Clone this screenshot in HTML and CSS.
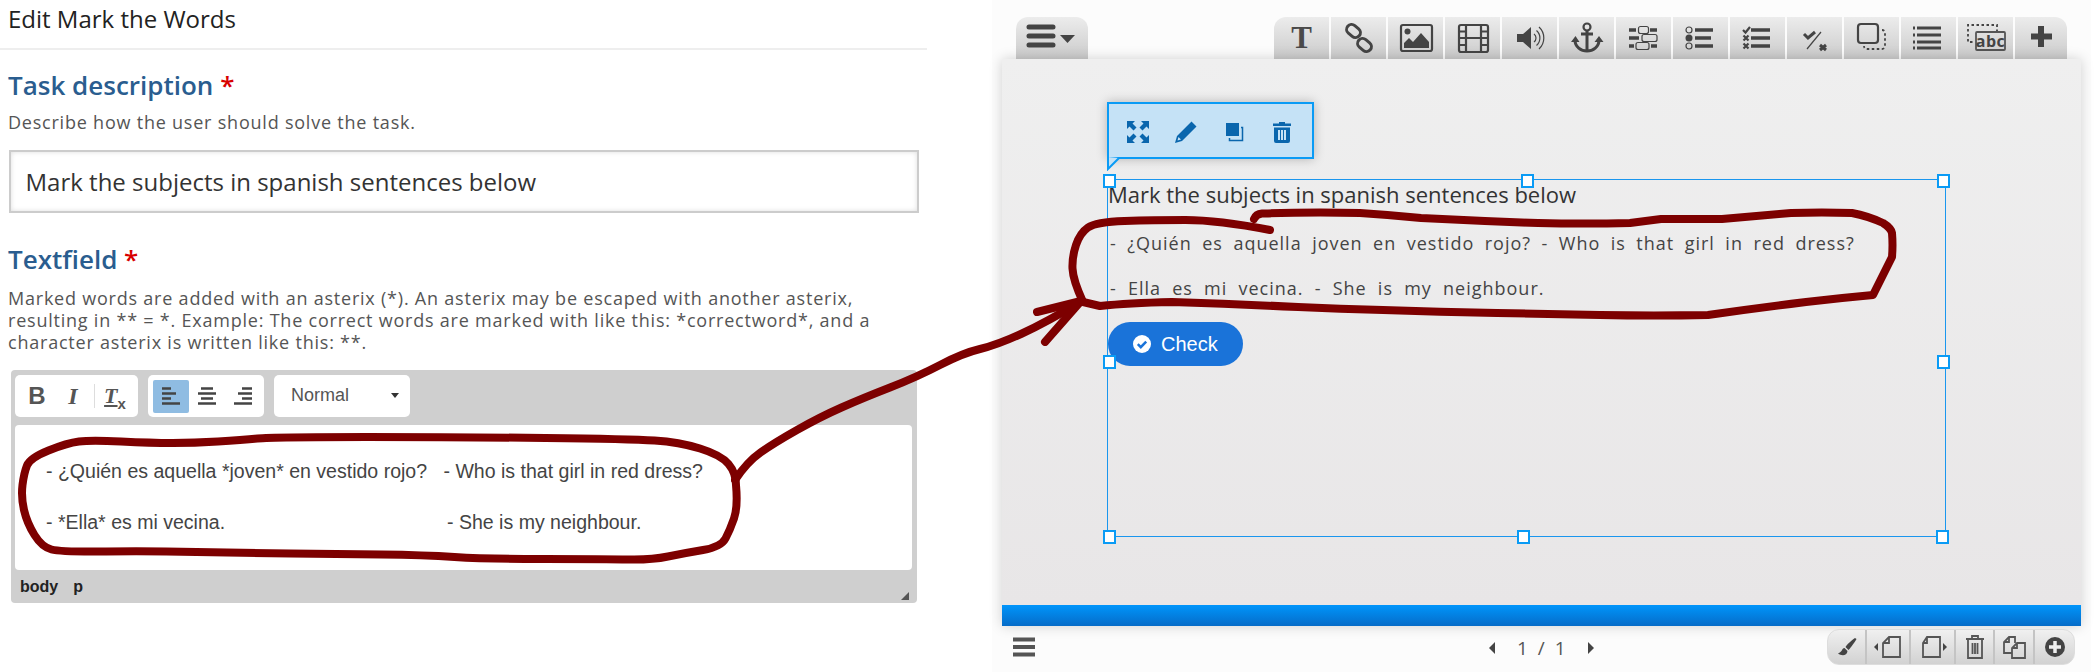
FILE: index.html
```html
<!DOCTYPE html>
<html lang="en">
<head>
<meta charset="utf-8">
<title>Edit Mark the Words</title>
<link rel="stylesheet" href="styles.css">
</head>
<body>
<main class="page">
  <section class="form">
    <h1 class="form-title">Edit Mark the Words</h1>
    <h2 class="field-label label-task">Task description <span class="req">*</span></h2>
    <p class="help help-task">Describe how the user should solve the task.</p>
    <div class="text-input">Mark the subjects in spanish sentences below</div>
    <h2 class="field-label label-text">Textfield <span class="req">*</span></h2>
    <p class="help help-text">Marked words are added with an asterix (*). An asterix may be escaped with another asterix,<br>resulting in ** = *. Example: The correct words are marked with like this: *correctword*, and a<br>character asterix is written like this: **.</p>
    <div class="rte">
      <div class="rte-toolbar">
        <div class="rte-group rte-group-a">
          <span class="rte-btn rte-b">B</span>
          <span class="rte-btn rte-i">I</span>
          <span class="rte-sep"></span>
          <span class="rte-btn rte-tx"><span class="rte-t">T</span><span class="rte-x">x</span></span>
        </div>
        <div class="rte-group rte-group-b">
          <span class="rte-btn rte-on"><svg width="20" height="20" viewBox="0 0 20 20"><path d="M1 2.500h9M1 7.500h14M1 12.500h9M1 17.500h18" class="ln"/></svg></span>
          <span class="rte-btn"><svg width="20" height="20" viewBox="0 0 20 20"><path d="M4 2.500h12M1 7.500h18M4 12.500h12M1 17.500h18" class="ln"/></svg></span>
          <span class="rte-btn"><svg width="20" height="20" viewBox="0 0 20 20"><path d="M9 2.500h10M5 7.500h14M9 12.500h10M1 17.500h18" class="ln"/></svg></span>
        </div>
        <div class="rte-group rte-select"><span>Normal</span><i class="rte-caret"></i></div>
      </div>
      <div class="rte-content">
        <p class="rte-line"><span class="rte-q">- ¿Quién es aquella *joven* en vestido rojo?</span><span>- Who is that girl in red dress?</span></p>
        <p class="rte-line"><span class="rte-q rte-q2">- *Ella* es mi vecina.</span><span>- She is my neighbour.</span></p>
      </div>
      <div class="rte-path"><span>body</span><span>p</span><i class="rte-grip"></i></div>
    </div>
  </section>

  <section class="author">
    <div class="tabs">
      <div class="tab tab-menu">
        <svg width="54" height="28" viewBox="0 0 54 28"><path d="M4 3h24M4 12h24M4 21h24" class="bar"/><path d="M35 11h15l-7.500 8z" class="fill"/></svg>
      </div>
      <div class="tools">
        <div class="tab tab-first"><span class="t-glyph">T</span></div>
        <div class="tab"><svg width="40" height="34" viewBox="0 0 40 34"><g class="st3"><rect x="7" y="5" width="15" height="10" rx="5" transform="rotate(40 14.500 10)"/><rect x="18" y="19" width="15" height="10" rx="5" transform="rotate(40 25.500 24)"/></g></svg></div>
        <div class="tab"><svg width="40" height="34" viewBox="0 0 40 34"><rect x="5" y="4" width="31" height="26" rx="2" class="st2"/><circle cx="11.500" cy="10.500" r="3" class="fill"/><path d="M8 27v-5l5-5 4 4 8-9 8 9v6z" class="fill"/></svg></div>
        <div class="tab"><svg width="40" height="34" viewBox="0 0 40 34"><rect x="6" y="4" width="29" height="27" rx="2" class="st2"/><path d="M13 4v27M28 4v27M13 17h15M6 10.500h7M6 17h7M6 24h7M28 10.500h7M28 17h7M28 24h7" class="st2"/></svg></div>
        <div class="tab"><svg width="40" height="34" viewBox="0 0 40 34"><path d="M7 13h6l8-7v22l-8-7H7z" class="fill"/><path d="M24 13a5 5 0 0 1 0 8M26.500 9.500a10 10 0 0 1 0 15M29 6a15 15 0 0 1 0 22" class="st1"/></svg></div>
        <div class="tab"><svg width="40" height="34" viewBox="0 0 40 34"><circle cx="20" cy="6" r="3.500" class="st2"/><path d="M20 10v21M14 13h12" class="st3"/><path d="M8 19c0 7 6 11 12 11s12-4 12-11" class="st3"/><path d="M4 21l4.500-6 4 6zM27.500 21l4.500-6 4.500 6z" class="fill"/></svg></div>
        <div class="tab"><svg width="40" height="34" viewBox="0 0 40 34"><path d="M5 9h7M26 9h7M5 17h10M5 25h5M27 25h6" class="st4"/><rect x="14.500" y="5.500" width="10" height="7" rx="2" class="st1"/><rect x="18" y="13.500" width="15" height="7" rx="2" class="st1"/><rect x="12" y="21.500" width="13" height="7" rx="2" class="st1"/></svg></div>
        <div class="tab"><svg width="40" height="34" viewBox="0 0 40 34"><circle cx="8" cy="9" r="3" class="st1"/><circle cx="8" cy="17" r="3.500" class="fill"/><circle cx="8" cy="25" r="3" class="st1"/><path d="M14 9h18M14 17h16M14 25h18" class="st4"/></svg></div>
        <div class="tab"><svg width="40" height="34" viewBox="0 0 40 34"><path d="M5 9l2.500 2.500L12 6" class="st2"/><path d="M5.500 14.500l5 5M10.500 14.500l-5 5M5.500 22.500l5 5M10.500 22.500l-5 5" class="st2"/><path d="M13 9h19M13 17h19M13 25h19" class="st4"/></svg></div>
        <div class="tab"><svg width="40" height="34" viewBox="0 0 40 34"><path d="M9 13l4 4 7-6" class="st3"/><path d="M12 28L26 11" class="st1"/><path d="M25 24l6 5M31 24l-6 5" class="st3"/></svg></div>
        <div class="tab"><svg width="40" height="34" viewBox="0 0 40 34"><rect x="6" y="3" width="20" height="19" rx="3" class="st2"/><path d="M30 9c1.500 0 3 1 3 3v13c0 2-1.500 3-3 3H15c-1.500 0-3-1-3-3" class="dash"/></svg></div>
        <div class="tab"><svg width="40" height="34" viewBox="0 0 40 34"><path d="M8 7h24M8 14h24M8 21h24M8 27h24" class="st3"/><path d="M4 7h2M4 14h2M4 21h2M4 27h2" class="st3"/></svg></div>
        <div class="tab tab-abc"><svg width="42" height="34" viewBox="0 0 42 34"><path d="M32 11V4H3v17h6" class="dash"/><rect x="11" y="11" width="29" height="18" rx="1" class="st1b"/><text x="25.500" y="25.500" class="abc">abc</text></svg></div>
        <div class="tab tab-last"><svg width="40" height="34" viewBox="0 0 40 34"><path d="M20 5v21M10 15.500h21" class="plus"/></svg></div>
      </div>
    </div>

    <div class="stage">
      <div class="canvas">
        <div class="popup">
          <svg class="pop-ico" width="24" height="24" viewBox="0 0 24 24"><path d="M1 1h8L6.500 3.500l4 4-3 3-4-4L1 9zM23 1v8l-2.500-2.500-4 4-3-3 4-4L15 1zM1 23v-8l2.500 2.500 4-4 3 3-4 4L9 23zM23 23h-8l2.500-2.500-4-4 3-3 4 4L23 15z" class="pfill"/></svg>
          <svg class="pop-ico" width="24" height="24" viewBox="0 0 24 24"><path d="M17.500 1.500l5 5L8 21l-7 2 2-7zM4.500 17l-1 3.500 3.500-1z" class="pfill" fill-rule="evenodd"/></svg>
          <svg class="pop-ico" width="24" height="24" viewBox="0 0 24 24"><rect x="4" y="3" width="13" height="13" class="pfill"/><path d="M19 7.500h1.500v13h-13V18" class="pst"/></svg>
          <svg class="pop-ico" width="24" height="24" viewBox="0 0 24 24"><path d="M9 3.500V2h6v1.500h6V6H3V3.500z" class="pfill"/><path d="M4 7.500h16V21a2 2 0 0 1-2 2H6a2 2 0 0 1-2-2zM8 10v10h2V10zM11 10v10h2V10zM14 10v10h2V10z" class="pfill" fill-rule="evenodd"/></svg>
          <svg class="pop-tail" width="14" height="14" viewBox="0 0 14 14"><path d="M1 0v12L12 1" class="tail"/></svg>
        </div>
        <div class="selection">
          <i class="handle h-tl"></i><i class="handle h-tm"></i><i class="handle h-tr"></i>
          <i class="handle h-ml"></i><i class="handle h-mr"></i>
          <i class="handle h-bl"></i><i class="handle h-bm"></i><i class="handle h-br"></i>
          <div class="task-title">Mark the subjects in spanish sentences below</div>
          <p class="word-line">- ¿Quién es aquella joven en vestido rojo? - Who is that girl in red dress?</p>
          <p class="word-line">- Ella es mi vecina. - She is my neighbour.</p>
          <button class="check" type="button"><svg width="18" height="18" viewBox="0 0 18 18"><circle cx="9" cy="9" r="9" fill="#fff"/><path d="M4.800 9.200l3 3 5.400-5.600" class="chk"/></svg>Check</button>
        </div>
      </div>
      <div class="progress"></div>
    </div>

    <div class="footer">
      <svg class="foot-menu" width="24" height="20" viewBox="0 0 24 20"><path d="M1 2.500h22M1 10h22M1 17.500h22" class="bar2"/></svg>
      <div class="pager"><i class="arr arr-l"></i><span>1 / 1</span><i class="arr arr-r"></i></div>
      <div class="page-tools">
        <span class="pt pt1"><svg width="24" height="24" viewBox="0 0 24 24"><path d="M20 3c-1.500 1-7 5-9.500 9l3 3C16 12.500 20.500 6 21.500 4zM9.500 13c-3 .5-2 4-6.500 5.500 3.500 2.500 9 2.500 9.500-2.500z" class="fill"/></svg></span>
        <span class="pt pt2"><svg width="30" height="24" viewBox="0 0 30 24"><path d="M1 12l4-4v8z" class="fill"/><path d="M16 2h11v20H10V8zM16 2v6h-6" class="st1b"/></svg></span>
        <span class="pt pt3"><svg width="30" height="24" viewBox="0 0 30 24"><path d="M29 12l-4-4v8z" class="fill"/><path d="M9 2h13v20H5V8zM9 2v6H5" class="st1b"/></svg></span>
        <span class="pt pt4"><svg width="24" height="26" viewBox="0 0 24 26"><path d="M3 5h18M9 5V2h6v3M5 5v19h14V5M9.500 9v11M12 9v11M14.500 9v11" class="st1b"/></svg></span>
        <span class="pt pt5"><svg width="26" height="26" viewBox="0 0 26 26"><path d="M14 9V3H8L3 8v11h8" class="st1b"/><path d="M16 9h8v15H11V14zM16 9v5h-5M8 3v5H3" class="st1b"/></svg></span>
        <span class="pt pt6"><svg width="24" height="24" viewBox="0 0 24 24"><circle cx="12" cy="12" r="10" class="fill"/><path d="M12 6v12M6 12h12" class="pluswhite"/></svg></span>
      </div>
    </div>
  </section>

  <svg class="scribble" width="2099" height="672" viewBox="0 0 2099 672">
    <path d="M736 485Q738 507 734 518.500Q730 530 725.500 538.500Q721 547 703 550Q685 553 668 556.500Q651 560 628.500 559.500Q606 559 545.500 559Q485 559 454.500 557Q424 555 381.500 554.500Q339 554 290.500 553.500Q242 553 196.500 552Q151 551 106 551.500Q61 552 51.500 549.500Q42 547 34.500 535Q27 523 24 510Q21 497 22.500 485Q24 473 27 465.500Q30 458 48.500 450.500Q67 443 79 441.500Q91 440 121 441.500Q151 443 172.500 443Q194 443 218 441.500Q242 440 257.500 438.500Q273 437 367 437Q461 437 545.500 438Q630 439 654.500 440.500Q679 442 700 448.500Q721 455 728.500 464Q736 473 736 485"/>
    <path d="M735 480Q747 462 760.500 452.500Q774 443 797 430Q820 417 841.500 407.500Q863 398 890 387.500Q917 377 940 365Q963 353 980 349Q997 345 1022 333.500Q1047 322 1080 302"/>
    <path d="M1037 312L1081 301L1045 342"/>
    <path d="M1083 302Q1073 280 1072.500 268.500Q1072 257 1076 245Q1080 233 1088 227.500Q1096 222 1124.500 221Q1153 220 1185.500 220Q1218 220 1270 230"/>
    <path d="M1254 219Q1256 214 1262 213.500Q1310 212 1360 213Q1391 215 1421 218Q1480 221 1538 223Q1584 224 1630 223Q1646 221 1661 219Q1692 219 1722 219Q1757 216 1791 213Q1822 212 1852 213Q1868 216 1883 223Q1891 228 1892 233Q1893 245 1892 257L1873 295Q1840 298 1806 302Q1757 308 1708 315Q1654 316 1600 315Q1548 314 1497 313Q1440 312 1383 310Q1340 309 1298 307Q1235 304 1172 302Q1128 303 1100 306L1083 302"/>
  </svg>
</main>
</body>
</html>
```

FILE: styles.css
```css
* { box-sizing: border-box; }
html, body { margin: 0; padding: 0; background: #fff; }
.page { position: relative; width: 2099px; height: 672px; overflow: hidden; display: flex; font-family: "Open Sans", sans-serif; }

/* left form */
.form { width: 927px; flex: none; }
.form-title { margin: 0; height: 50px; padding: 5px 0 0 8px; font-size: 24px; line-height: 28px; font-weight: 400; color: #222; border-bottom: 2px solid #eee; }
.field-label { margin: 0; padding-left: 8px; font-size: 26px; line-height: 36px; font-weight: 600; color: #2a5d8f; }
.req { color: #d80000; }
.label-task { padding-top: 17px; height: 54px; }
.label-text { margin-top: 28px; height: 36px; }
.help { margin: 0; padding-left: 8px; font-size: 18px; color: #555; letter-spacing: .78px; white-space: nowrap; }
.help-task { margin-top: 6px; line-height: 24px; height: 24px; }
.help-text { margin-top: 10px; line-height: 22px; }
.text-input { margin: 16px 0 0 9px; width: 910px; height: 63px; padding-left: 14.500px; border: 2px solid #ccc; font-size: 24px; line-height: 59px; color: #333; box-shadow: inset 0 0 5px #ddd; }

.rte { margin: 17px 0 0 11px; width: 906px; height: 233px; background: #cfcfcf; border-radius: 4px; padding: 5px 5px 0 4px; }
.rte-toolbar { display: flex; gap: 10px; height: 49px; }
.rte-group { height: 42px; background: #fff; border-radius: 5px; display: flex; align-items: center; }
.rte-group-a { width: 123px; padding-left: 4px; }
.rte-group-b { width: 116px; padding-left: 5px; }
.rte-btn { width: 36px; height: 33px; display: flex; align-items: center; justify-content: center; color: #555; border-radius: 2px; }
.rte-b { font: 700 24px "Liberation Sans", sans-serif; }
.rte-i { font: italic 700 24px "Liberation Serif", serif; }
.rte-sep { width: 1px; height: 24px; margin: 0 2px 0 3px; background: #ddd; }
.rte-t { font: italic 700 22px "Liberation Serif", serif; text-decoration: underline; }
.rte-x { font: 700 15px "Liberation Sans", sans-serif; align-self: flex-end; margin-bottom: 1px; }
.rte-on { background: #8fbce2; }
.ln { stroke: #444; stroke-width: 2.500; fill: none; }
.rte-select { width: 136px; padding: 0 11px 2px 17px; justify-content: space-between; font: 18px "Liberation Sans", sans-serif; color: #555; }
.rte-caret { width: 0; height: 0; border-left: 4px solid transparent; border-right: 4px solid transparent; border-top: 5px solid #333; }
.rte-content { height: 145px; margin: 1px 0 0 0; width: 897px; background: #fff; border-radius: 4px; padding: 35px 0 0 31px; font: 19.550px "Liberation Sans", sans-serif; color: #444; }
.rte-line { margin: 0 0 28px; line-height: 23px; white-space: nowrap; }
.rte-q { display: inline-block; width: 397.500px; }
.rte-q2 { width: 401px; }
.rte-path { position: relative; display: flex; gap: 15px; padding: 8px 0 0 5px; font: 700 16px "Liberation Sans", sans-serif; color: #222; }
.rte-grip { position: absolute; right: 3px; top: 22px; width: 0; height: 0; border-left: 8px solid transparent; border-bottom: 8px solid #555; }

/* right author tool */
.author { width: 1099px; flex: none; margin-left: 65px; padding: 4px 10px 0 10px; background: #fcfcfc; }
.tabs { display: flex; justify-content: space-between; padding: 13px 14px 0; height: 55px; }
.tools { display: flex; gap: 2px; }
.tab { width: 55px; height: 42px; display: flex; align-items: center; justify-content: center; background: linear-gradient(#ececec, #cbcbcb); }
.tab-menu { width: 72px; border-radius: 12px 12px 0 0; }
.tab-first { border-top-left-radius: 12px; }
.tab-last { width: 52px; border-top-right-radius: 12px; }
.t-glyph { font: 700 31px "Liberation Serif", serif; color: #4a4a4a; }
.bar { stroke: #444; stroke-width: 5; stroke-linecap: round; fill: none; }
.bar2 { stroke: #555; stroke-width: 4; fill: none; }
.fill { fill: #444; }
.st1 { fill: none; stroke: #444; stroke-width: 1.200; }
.st1b { fill: none; stroke: #555; stroke-width: 1.800; }
.st2 { fill: none; stroke: #444; stroke-width: 2.200; }
.st3 { fill: none; stroke: #444; stroke-width: 3; }
.st4 { fill: none; stroke: #444; stroke-width: 3.500; }
.dash { fill: none; stroke: #444; stroke-width: 1.800; stroke-dasharray: 2.500 2.500; }
.abc { font: 700 16px "Open Sans", sans-serif; fill: #444; text-anchor: middle; letter-spacing: .5px; }
.plus { stroke: #444; stroke-width: 6; fill: none; }

.stage { height: 567px; box-shadow: 0 0 12px rgba(0,0,0,.18); position: relative; }
.canvas { position: relative; height: 546px; background: linear-gradient(#efefef, #e8e6e7); }
.progress { height: 21px; background: linear-gradient(#0095fb, #066cc8); }

.popup { position: absolute; left: 105px; top: 43px; width: 207px; height: 57px; background: #c5e2f6; border: 2px solid #0a9bf5; box-shadow: 0 0 10px rgba(0,0,0,.25); display: flex; align-items: center; padding: 2px 18px 0 17px; justify-content: space-between; }
.pop-ico { flex: none; }
.pfill { fill: #0a66ad; }
.pst { fill: none; stroke: #0a66ad; stroke-width: 1.500; }
.pop-tail { position: absolute; left: -2px; bottom: -14px; }
.tail { fill: #c5e2f6; stroke: #0a9bf5; stroke-width: 2; }

.selection { position: absolute; left: 105px; top: 120px; width: 839px; height: 358px; border: 1px solid #1a96ee; }
.handle { position: absolute; width: 13px; height: 14px; background: #fff; border: 2.500px solid #0a9bf5; z-index: 2; }
.h-tl { left: -5px; top: -6px; }
.h-tm { left: 413px; top: -6px; }
.h-tr { left: 829px; top: -6px; }
.h-ml { left: -5px; top: 175px; }
.h-mr { left: 829px; top: 175px; }
.h-bl { left: -5px; top: 350px; }
.h-bm { left: 409px; top: 350px; }
.h-br { left: 828px; top: 350px; }
.task-title { font-size: 22px; line-height: 30px; color: #333; margin-top: -1px; }
.word-line { margin: 21px 0 0 2px; font-size: 18px; line-height: 26px; color: #444; letter-spacing: 1px; word-spacing: 4.800px; white-space: nowrap; }
.word-line + .word-line { margin-top: 19px; word-spacing: 5.500px; }
.check { display: flex; align-items: center; gap: 10px; margin-top: 21px; width: 135px; height: 44px; padding: 0 0 0 25px; border: 0; border-radius: 22px; background: #1a73d9; color: #fff; font: 20px "Liberation Sans", sans-serif; }
.chk { fill: none; stroke: #1a73d9; stroke-width: 2.500; }

.footer { position: relative; display: flex; align-items: center; justify-content: space-between; height: 46px; padding: 0 6px 4px 10px; }
.foot-menu { flex: none; }
.pager { position: absolute; left: 487px; top: 9px; display: flex; align-items: center; gap: 22px; font-size: 19px; line-height: 26px; color: #555; word-spacing: 5px; }
.arr { width: 0; height: 0; border-top: 6px solid transparent; border-bottom: 6px solid transparent; }
.arr-l { border-right: 6px solid #444; }
.arr-r { border-left: 6px solid #444; }
.page-tools { display: flex; width: 248px; height: 36px; background: linear-gradient(#f0f0f0, #d2d2d2); border: 1px solid #ddd; border-radius: 12px; }
.pt { display: flex; align-items: center; justify-content: center; border-right: 2px solid #c4c4c4; }
.pt1 { width: 39px; }
.pt2 { width: 44px; }
.pt3 { width: 45px; }
.pt4 { width: 39px; }
.pt5 { width: 40px; }
.pt6 { flex: 1; border-right: 0; }
.pluswhite { stroke: #eee; stroke-width: 3.500; fill: none; }

/* hand-drawn annotation over the screenshot */
.scribble { position: absolute; left: 0; top: 0; pointer-events: none; }
.scribble path { fill: none; stroke: #7d0000; stroke-width: 8; stroke-linecap: round; stroke-linejoin: round; filter: blur(.5px); }
```
